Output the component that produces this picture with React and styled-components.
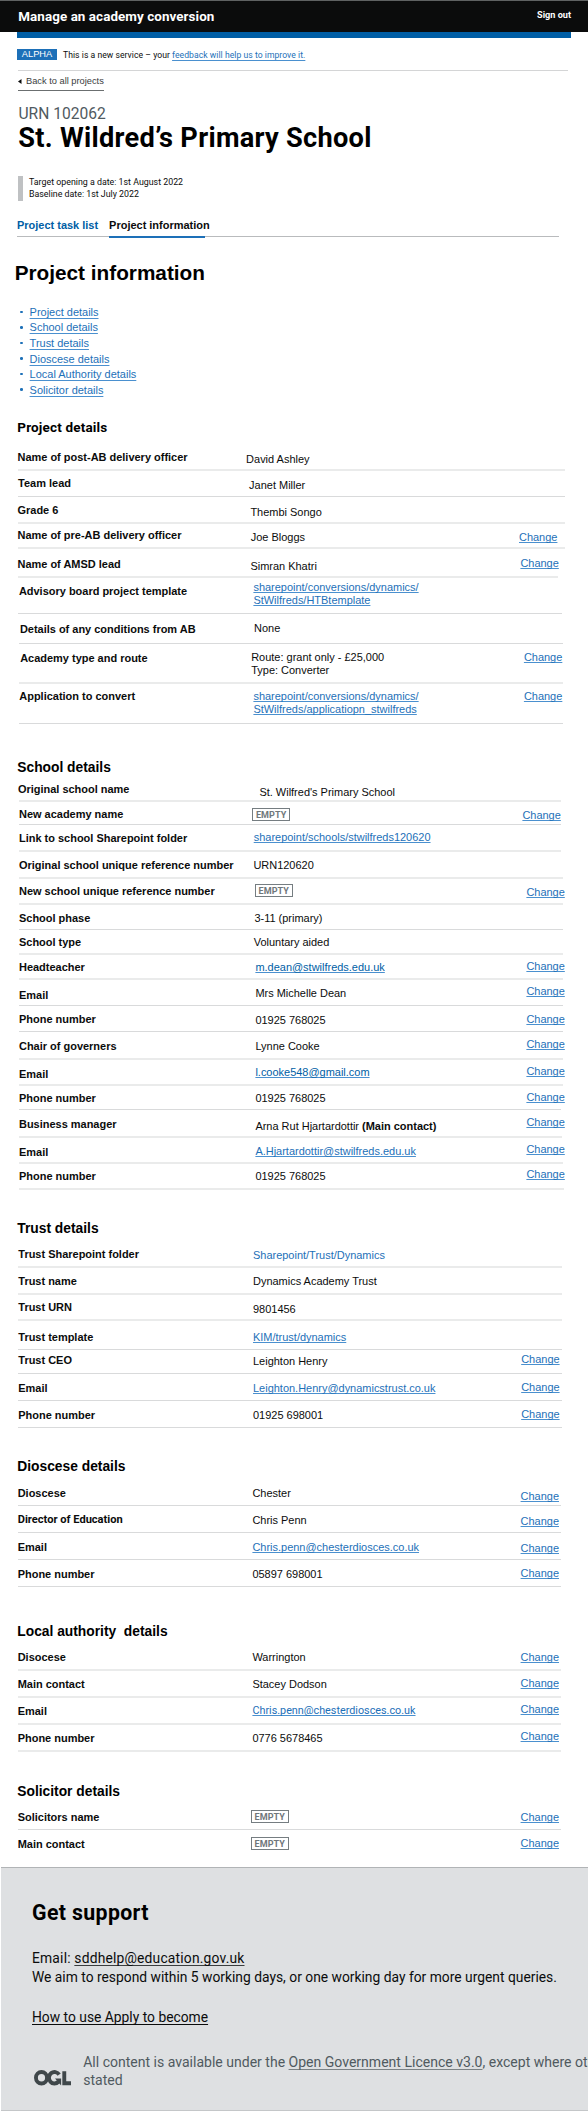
import React from 'react';
import styled, { createGlobalStyle, css } from 'styled-components';

const sans = '"Liberation Sans", Arial, sans-serif';
const transport = 'Roboto, "Liberation Sans", sans-serif';
const blue = '#1d70b8';

const GlobalStyle = createGlobalStyle`
  html, body { margin: 0; background: #fff; }
  *, *::before, *::after { box-sizing: border-box; }
`;

const Page = styled.div`
  width: 588px;
  height: 2113px;
  overflow: hidden;
  display: flex;
  flex-direction: column;
  color: #0b0c0c;
  font: 10.97px/12px ${sans};
  white-space: nowrap;
`;

const Masthead = styled.header`
  height: 32px;
  flex: none;
  display: flex;
  justify-content: space-between;
  align-items: flex-start;
  padding: 8px 17px 0 18.3px;
  background: #0b0c0c;
  border-top: 1px solid #5f6262;
  color: #fff;
  font-family: ${transport};
  font-weight: 700;
`;

const ServiceName = styled.span`
  font-size: 13.4px;
  line-height: 16px;
  letter-spacing: 0.08px;
`;

const SignOut = styled.a`
  font-size: 9.15px;
  line-height: 12px;
`;

const BlueBar = styled.div`
  flex: none;
  height: 6px;
  margin: 0 17px;
  background: #005ea5;
`;

const PhaseBanner = styled.div`
  flex: none;
  display: flex;
  align-items: flex-start;
  height: 33px;
  margin: 0 20px 0 17.5px;
  padding-top: 11px;
  border-bottom: 1px solid #d4d5d6;
  font: 8.6px/12px ${transport};
`;

const PhaseTag = styled.strong`
  width: 40px;
  height: 11px;
  margin: 0 6px 0 -0.5px;
  background: ${blue};
  color: #fff;
  font: 400 9.26px/11px ${sans};
  text-align: center;
`;

const Link = styled.a`
  color: ${(p) => p.$color || blue};
  text-decoration: ${(p) => (p.$plain ? 'none' : 'underline')};
  text-decoration-color: ${(p) => p.$line || '#4a90cf'};
  text-decoration-thickness: 1px;
  text-underline-offset: ${(p) => p.$drop || 1}px;
  text-decoration-skip-ink: none;
`;

const PhaseText = styled.span`
  letter-spacing: 0.045px;
`;

const BackLink = styled.a`
  align-self: flex-start;
  flex: none;
  display: flex;
  align-items: center;
  gap: 4.5px;
  height: 16px;
  margin: 4px 0 0 18px;
  padding-bottom: 3px;
  border-bottom: 1px solid #6b6f70;
  color: #3a3d3e;
  font-size: 9.28px;
`;

const Caption = styled.div`
  flex: none;
  margin: 14px 0 0 18.5px;
  color: #505a5f;
  font: 15.6px/18px ${transport};
`;

const Title = styled.h1`
  flex: none;
  margin: 0 0 0 18.3px;
  color: #000;
  font: 700 27.2px/30px ${transport};
  letter-spacing: 0.28px;
`;

const Inset = styled.div`
  flex: none;
  height: 25px;
  margin: 23px 0 0 18px;
  padding-left: 6px;
  border-left: 5px solid #bfc1c3;
  font: 8.83px/12.4px ${transport};
`;

const Tabs = styled.nav`
  flex: none;
  display: flex;
  gap: 11px;
  height: 20px;
  margin: 16px 29px 0 17px;
  border-bottom: 1px solid #b9bbbd;
  font-weight: 700;
`;

const Tab = styled.a`
  height: 21px;
  padding-top: 2.4px;
  color: ${(p) => (p.$active ? '#0b0c0c' : '#005ea5')};
  ${(p) => p.$active && css`
    width: 96px;
    border-bottom: 2px solid ${blue};
  `}
`;

const PageHeading = styled.h2`
  flex: none;
  margin: 24px 0 0 14.7px;
  color: #000;
  font: 700 20.75px/24px ${sans};
`;

const Contents = styled.ul`
  flex: none;
  display: flex;
  flex-direction: column;
  margin: 19px 0 0 20px;
  padding: 0;
  list-style: none;
`;

const ContentsItem = styled.li`
  display: flex;
  align-items: center;
  gap: 7px;
  height: 15.6px;
  &::before {
    content: '';
    width: 2.6px;
    height: 2.6px;
    border-radius: 50%;
    background: ${blue};
  }
`;

const SectionHeading = styled.h3`
  flex: none;
  height: ${(p) => p.$h}px;
  margin: 0;
  padding: ${(p) => p.$top}px 0 0 17.3px;
  color: #000;
  font: 700 ${(p) => (p.$transport ? '13.5px' : '13.8px')}/16px ${(p) => (p.$transport ? transport : sans)};
  letter-spacing: ${(p) => (p.$transport ? '0.17px' : '0')};
  white-space: pre;
`;

const SummaryRow = styled.div`
  flex: none;
  display: grid;
  grid-template-columns: 235px 1fr 78px;
  height: ${(p) => p.$h}px;
  margin-left: ${(p) => p.$from}px;
  width: ${(p) => p.$to - p.$from}px;
  border-bottom: ${(p) => (p.$line === 'none' ? 'none' : p.$line === 'soft' ? '2px solid #eaebeb' : '1px solid #d9dadb')};
`;

const cell = css`
  padding-top: ${(p) => p.$top}px;
  margin-left: ${(p) => p.$left}px;
`;

const Key = styled.div`
  ${cell}
  font-weight: 700;
  ${(p) => p.$transport && css`font-family: ${transport}; font-size: 11.1px;`}
`;

const Value = styled.div`
  ${cell}
  line-height: ${(p) => (p.$multi ? 12.7 : 12)}px;
  ${(p) => p.$transport && css`font-family: ${transport}; font-size: 10.8px;`}
`;

const Action = styled.div`
  ${cell}
`;

const EmptyTag = styled.strong`
  display: block;
  width: 37.5px;
  height: 13px;
  border: 1px solid #757d81;
  color: #6f777b;
  font: 700 9px/12px ${transport};
  letter-spacing: 0.1px;
  text-align: center;
`;

const Footer = styled.footer`
  flex: none;
  height: 244.5px;
  margin-left: 1px;
  padding: 33.5px 0 0 31px;
  background: #dee0e2;
  border-top: 1px solid #b1b4b6;
  border-bottom: 1px solid #c4c6c8;
  font: 13.84px/19.7px ${transport};
`;

const FooterHeading = styled.h2`
  margin: 0;
  color: #000;
  font: 700 21.3px/24px ${transport};
  letter-spacing: 0.36px;
`;

const FooterContact = styled.div`
  margin-top: 23.3px;
`;

const MailLine = styled.div`
  letter-spacing: 0.19px;
`;

const FooterGuide = styled.div`
  margin-top: 20px;
`;

const Licence = styled.div`
  display: flex;
  margin-top: 25px;
  color: #505a5f;
  font-size: 14.04px;
  line-height: 18px;
`;

const Logo = styled.svg`
  flex: none;
  width: 37px;
  height: 15.5px;
  margin: 17.5px 12.5px 0 1.7px;
`;

/*
  Each row: h = row height, line = rule style, k / v / c = top padding of the
  key, value and action cells, vx / cx = left edges of the value and action.
*/
const sections = [
  {
    title: 'Project details', h: 52.4, top: 21.8, transport: true, from: 17.5, to: 564.5, kx: 17.2, vx: 250, cx: 520,
    rows: [
      { h: 21, line: 'soft', key: 'Name of post-AB delivery officer', k: 1, text: 'David Ashley', v: 2.7, vx: 245.7 },
      { h: 26, key: 'Team lead', k: 6.5, text: 'Janet Miller', v: 8.2, vx: 248.7, kx: 17.8 },
      { h: 27, line: 'soft', key: 'Grade 6', k: 7.2, text: 'Thembi Songo', v: 8.8 },
      { h: 25, line: 'soft', key: 'Name of pre-AB delivery officer', k: 5.2, text: 'Joe Bloggs', v: 6.8, vx: 250.3, c: 6.7, cx: 518.6 },
      { h: 29, line: 'soft', to: 557.5, key: 'Name of AMSD lead', k: 9, text: 'Simran Khatri', v: 10.7, c: 8.2 },
      { h: 36, to: 562, key: 'Advisory board project template', k: 7.2, kx: 18.6, link: ['sharepoint/conversions/dynamics/', 'StWilfreds/HTBtemplate'], v: 3.5, vx: 253 },
      { h: 30, from: 19, to: 562.5, key: 'Details of any conditions from AB', k: 8.8, kx: 19.6, text: 'None', v: 8.2, vx: 253.7 },
      { h: 40, line: 'soft', from: 19, to: 562.5, key: 'Academy type and route', k: 7.7, kx: 19.9, text: ['Route: grant only - £25,000', 'Type: Converter'], v: 7.2, vx: 250.8, c: 6.7, cx: 523.5 },
      { h: 40, from: 19, to: 562.5, key: 'Application to convert', k: 6.3, kx: 19, link: ['sharepoint/conversions/dynamics/', 'StWilfreds/applicatiopn_stwilfreds'], v: 6, vx: 253, c: 6.3, cx: 523.5 },
    ],
  },
  {
    title: 'School details', h: 56, top: 36.3, from: 19, to: 562.7, kx: 18.7, vx: 255, cx: 526,
    rows: [
      { h: 22, line: 'soft', to: 561, key: 'Original school name', k: 3.5, kx: 17.6, text: "St. Wilfred's Primary School", v: 5.7, vx: 259 },
      { h: 23, to: 560.5, key: 'New academy name', k: 5.8, empty: true, v: 5.8, vx: 252, c: 7.3, cx: 522 },
      { h: 27, line: 'soft', to: 560.5, key: 'Link to school Sharepoint folder', k: 7.5, link: 'sharepoint/schools/stwilfreds120620', v: 6, vx: 253.3 },
      { h: 27, line: 'soft', key: 'Original school unique reference number', k: 7.3, text: 'URN120620', v: 7.3, vx: 253 },
      { h: 26, line: 'soft', key: 'New school unique reference number', k: 6.3, empty: true, v: 5.5, vx: 254.6, c: 6.7 },
      { h: 25, key: 'School phase', k: 6.8, text: '3-11 (primary)', v: 6.7, vx: 254 },
      { h: 25, line: 'soft', key: 'School type', k: 6.2, text: 'Voluntary aided', v: 6, vx: 253.3 },
      { h: 25, line: 'soft', key: 'Headteacher', k: 6.3, link: 'm.dean@stwilfreds.edu.uk', strong: true, v: 6, c: 5 },
      { h: 26, key: 'Email', k: 9, text: 'Mrs Michelle Dean', v: 6.7, c: 5.3 },
      { h: 26, key: 'Phone number', k: 7.2, text: '01925 768025', v: 7.7, c: 7 },
      { h: 28, line: 'soft', key: 'Chair of governers', k: 8.3, text: 'Lynne Cooke', v: 8.2, c: 6.5 },
      { h: 26, line: 'soft', key: 'Email', k: 8, link: 'l.cooke548@gmail.com', strong: true, v: 5.7, c: 5 },
      { h: 24, to: 561, key: 'Phone number', k: 6.2, text: '01925 768025', v: 6.5, c: 5 },
      { h: 28, line: 'soft', to: 562, key: 'Business manager', k: 8.2, text: 'Arna Rut Hjartardottir ', bold: '(Main contact)', v: 9.7, c: 6.3 },
      { h: 26, line: 'soft', key: 'Email', k: 7.7, link: 'A.Hjartardottir@stwilfreds.edu.uk', v: 7.3, c: 4.7 },
      { h: 26, line: 'soft', to: 563.5, key: 'Phone number', k: 6.2, text: '01925 768025', v: 6.3, c: 4.5 },
    ],
  },
  {
    title: 'Trust details', h: 56, top: 31.5, from: 18.3, to: 562, kx: 18, vx: 252.6, cx: 520.8,
    rows: [
      { h: 22, line: 'soft', key: 'Trust Sharepoint folder', k: 2.3, link: 'Sharepoint/Trust/Dynamics', plain: true, v: 3.3 },
      { h: 27, line: 'soft', key: 'Trust name', k: 7.3, text: 'Dynamics Academy Trust', v: 7.3 },
      { h: 26, line: 'soft', key: 'Trust URN', k: 6.3, text: '9801456', v: 8 },
      { h: 29, key: 'Trust template', k: 9.7, link: 'KIM/trust/dynamics', v: 9.7 },
      { h: 24, key: 'Trust CEO', k: 4.3, text: 'Leighton Henry', v: 5, c: 3.3 },
      { h: 27, key: 'Email', k: 8, link: 'Leighton.Henry@dynamicstrust.co.uk', v: 8, c: 6.7 },
      { h: 27, key: 'Phone number', k: 8, text: '01925 698001', v: 8, c: 7 },
    ],
  },
  {
    title: 'Dioscese details', h: 58, top: 31.5, from: 17.6, to: 561, kx: 17.4, vx: 252, cx: 520.2,
    rows: [
      { h: 20, key: 'Dioscese', k: 0.8, text: 'Chester', v: 0.8, c: 3.7 },
      { h: 27, key: 'Director of Education', keyTransport: true, k: 8.2, text: 'Chris Penn', v: 8.2, c: 9.2 },
      { h: 27, key: 'Email', k: 8.2, link: 'Chris.penn@chesterdiosces.co.uk', v: 8.2, c: 8.7 },
      { h: 27, key: 'Phone number', k: 8.2, text: '05897 698001', v: 8.2, c: 7.3 },
    ],
  },
  {
    title: 'Local authority  details', h: 63, top: 37, from: 17.6, to: 561, kx: 17.4, vx: 252, cx: 520.2,
    rows: [
      { h: 21, line: 'soft', key: 'Disocese', k: 1.2, text: 'Warrington', v: 1.2, c: 1.3 },
      { h: 27, line: 'soft', key: 'Main contact', k: 7.2, text: 'Stacey Dodson', v: 7.2, c: 6 },
      { h: 27, line: 'soft', key: 'Email', k: 7.3, link: 'Chris.penn@chesterdiosces.co.uk', valueTransport: true, v: 7.5, c: 4.7 },
      { h: 27, line: 'soft', key: 'Phone number', k: 7.3, text: '0776 5678465', v: 7.3, c: 5 },
    ],
  },
  {
    title: 'Solicitor details', h: 57, top: 31.7, from: 17.6, to: 561, kx: 17.4, vx: 250.6, cx: 520.2,
    rows: [
      { h: 21, key: 'Solicitors name', k: 1.8, empty: true, v: 1.5, c: 1.8 },
      { h: 37, line: 'none', key: 'Main contact', k: 7.8, empty: true, v: 7, c: 6.7 },
    ],
  },
];

const contents = ['Project details', 'School details', 'Trust details', 'Dioscese details', 'Local Authority details', 'Solicitor details'];

const lines = (content) =>
  [].concat(content).map((part, i) => (
    <React.Fragment key={part}>
      {i > 0 && <br />}
      {part}
    </React.Fragment>
  ));

function Row({ row, section }) {
  const from = row.from ?? section.from;
  const to = row.to ?? section.to;
  const kx = row.kx ?? section.kx;
  const vx = row.vx ?? section.vx;
  const cx = row.cx ?? section.cx;
  return (
    <SummaryRow $h={row.h} $line={row.line} $from={from} $to={to}>
      <Key $top={row.k} $left={kx - from + 0.3} $transport={row.keyTransport}>{row.key}</Key>
      <Value $top={row.v} $left={vx - from - 234.6} $multi={Array.isArray(row.link || row.text)} $transport={row.valueTransport}>
        {row.empty && <EmptyTag>EMPTY</EmptyTag>}
        {row.link && (
          <Link $plain={row.plain} $color={row.strong ? '#005ea5' : blue}>{lines(row.link)}</Link>
        )}
        {row.text && lines(row.text)}
        {row.bold && <b>{row.bold}</b>}
      </Value>
      {row.c !== undefined && (
        <Action $top={row.c} $left={cx - to + 78.4}><Link>Change</Link></Action>
      )}
    </SummaryRow>
  );
}

function OglLogo() {
  return (
    <Logo viewBox="0 0 484 196" preserveAspectRatio="none" fill="none" stroke="#3f474a" strokeWidth="51">
      <circle cx="98" cy="98" r="72.5" />
      <path d="M329 59A72.5 72.5 0 1 0 320 149" />
      <path d="M275 106h80v88h-3z" fill="#3f474a" stroke="none" />
      <path d="M396 16V168H484" />
    </Logo>
  );
}

export default function App() {
  return (
    <Page>
      <GlobalStyle />
      <Masthead>
        <ServiceName>Manage an academy conversion</ServiceName>
        <SignOut>Sign out</SignOut>
      </Masthead>
      <BlueBar />
      <PhaseBanner>
        <PhaseTag>ALPHA</PhaseTag>
        <PhaseText>
          This is a new service – your <Link $drop={1.5}>feedback will help us to improve it.</Link>
        </PhaseText>
      </PhaseBanner>
      <BackLink>
        <svg width="3.5" height="5" viewBox="0 0 3.5 5"><path d="M3.5 0v5L0 2.5z" fill="#0b0c0c" /></svg>
        Back to all projects
      </BackLink>
      <Caption>URN 102062</Caption>
      <Title>St. Wildred’s Primary School</Title>
      <Inset>
        Target opening a date: 1st August 2022
        <br />
        Baseline date: 1st July 2022
      </Inset>
      <Tabs>
        <Tab>Project task list</Tab>
        <Tab $active>Project information</Tab>
      </Tabs>
      <PageHeading>Project information</PageHeading>
      <Contents>
        {contents.map((c) => (
          <ContentsItem key={c}><Link $drop={1.5}>{c}</Link></ContentsItem>
        ))}
      </Contents>
      {sections.map((s) => (
        <React.Fragment key={s.title}>
          <SectionHeading $h={s.h} $top={s.top} $transport={s.transport}>{s.title}</SectionHeading>
          {s.rows.map((r, i) => <Row key={i} row={r} section={s} />)}
        </React.Fragment>
      ))}
      <Footer>
        <FooterHeading>Get support</FooterHeading>
        <FooterContact>
          <MailLine>Email: <Link $color="#0b0c0c" $line="#3a3d3e" $drop={2}>sddhelp@education.gov.uk</Link></MailLine>
          We aim to respond within 5 working days, or one working day for more urgent queries.
        </FooterContact>
        <FooterGuide>
          <Link $color="#0b0c0c" $line="#0b0c0c" $drop={2}>How to use Apply to become</Link>
        </FooterGuide>
        <Licence>
          <OglLogo />
          <span>
            All content is available under the <Link $color="#505a5f" $line="#7b8285" $drop={2}>Open Government Licence v3.0</Link>, except where otherwise
            <br />
            stated
          </span>
        </Licence>
      </Footer>
    </Page>
  );
}
